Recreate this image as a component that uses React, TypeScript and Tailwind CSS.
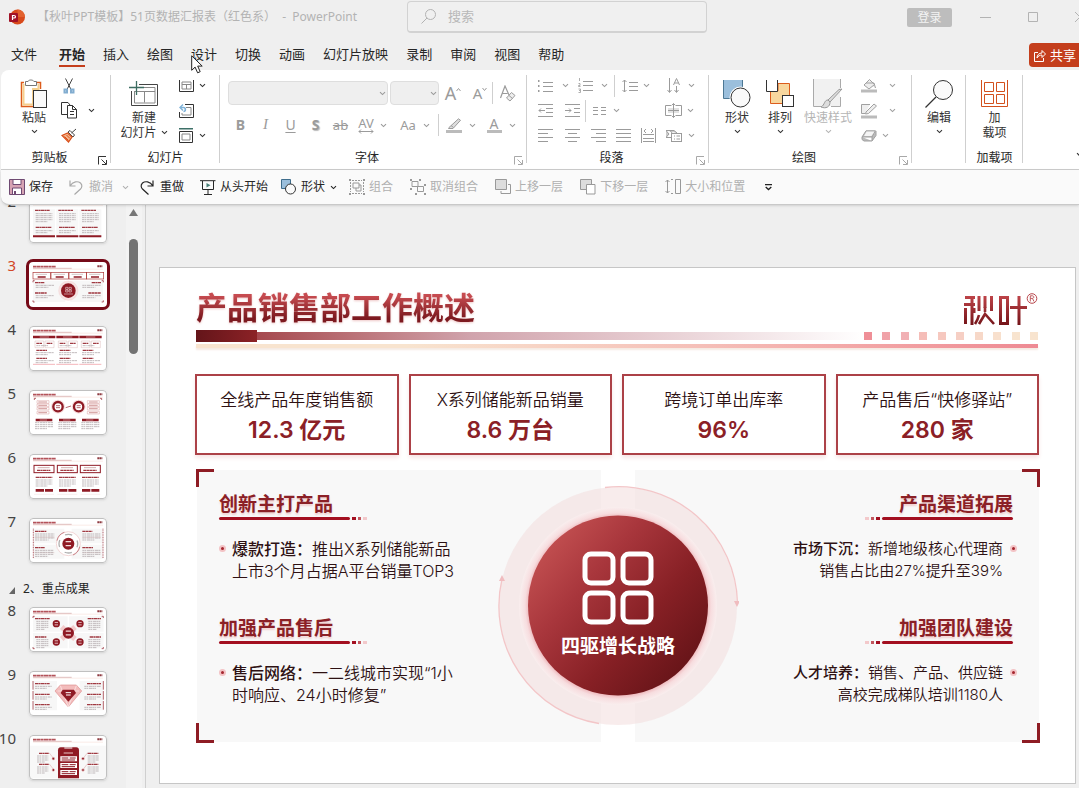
import React from "react";

type Kids = { children?: React.ReactNode };

function Svg({ w, h, children, className = "" }: { w: number; h: number; className?: string } & Kids) {
  return (
    <svg width={w} height={h} viewBox={`0 0 ${w} ${h}`} fill="none" stroke="currentColor" className={`shrink-0 ${className}`} aria-hidden="true">
      {children}
    </svg>
  );
}

function Chevron() {
  return (
    <Svg w={7} h={5}>
      <path d="M1 1.200 3.500 3.600 6 1.200" strokeWidth="1.100" />
    </Svg>
  );
}

function Tool({ label, className = "", children }: { label: string; className?: string } & Kids) {
  return (
    <button type="button" aria-label={label} className={`flex h-full shrink-0 items-center justify-center ${className}`}>
      {children}
    </button>
  );
}

function ToolRow({ children }: Kids) {
  return <div className="flex h-[25px] shrink-0 items-center">{children}</div>;
}

function Group({ title, launcher, dark, className = "", children }: { title?: string; launcher?: boolean; dark?: boolean; className?: string } & Kids) {
  return (
    <section className={`relative flex shrink-0 flex-col pt-[3px] ${className}`}>
      <div className="flex h-[76px]">{children}</div>
      <div className="flex h-[18px] items-center">
        <span className="flex-1 text-center text-xs text-[#262626]">{title}</span>
        {launcher && (
          <button type="button" aria-label={`${title}设置`} className={`mt-1 mr-px w-3 ${dark ? "text-[#333]" : "text-[#a8a8a8]"}`}>
            <Svg w={9} h={9}>
              <path d="M.5 8.500V.5h7.500M3.500 3.500l4.500 4.500M8.500 4v4.500H4" />
            </Svg>
          </button>
        )}
      </div>
      <span className="absolute top-[5px] right-0 bottom-[6px] w-px bg-[#cfcfcf]" />
    </section>
  );
}

function BigTool({ icon, label, className = "" }: { icon: React.ReactNode; label: React.ReactNode; className?: string }) {
  return (
    <button type="button" className={`flex shrink-0 flex-col items-center pt-[5px] text-xs leading-[15px] ${className}`}>
      <span className="flex h-8 items-center">{icon}</span>
      {label}
    </button>
  );
}

function AlignIcon({ rows }: { rows: [number, number][] }) {
  return (
    <Svg w={15} h={13}>
      {rows.map(([a, b], i) => (
        <path key={i} d={`M${a} ${i * 4 + 0.5}H${b}`} />
      ))}
    </Svg>
  );
}

function VRule({ className = "" }: { className?: string }) {
  return <span className={`h-[22px] w-px shrink-0 self-center bg-[#cfcfcf] ${className}`} />;
}

/* ---------- ribbon ---------- */

function Ribbon() {
  return (
    <div className="relative ml-px flex h-[100px] overflow-hidden rounded-tl-lg border-b border-[#cccccc] bg-white text-[#333]">
      <Group title="剪贴板" launcher dark className="w-[110px]">
        <BigTool
          className="w-[54px] pl-3"
          icon={
            <Svg w={28} h={30}>
              <path d="M4 3.500H1.500v24H13M17 3.500h3.500V10" stroke="#dc5c1c" strokeWidth="1.5" />
              <path d="M3.500 5v20.500h9.500V10h5.500V5" stroke="#f6cf8d" strokeWidth="2" />
              <path d="M5.500 6.500v-4H8c.5-2 5-2 6 0h2.500v4z" fill="#fff" stroke="#777" />
              <rect x="13.500" y="11.500" width="13" height="17" fill="#fafafa" stroke="#333" />
            </Svg>
          }
          label={<><span>粘贴</span><span className="mt-1"><Chevron /></span></>}
        />
        <div className="flex flex-col pl-1">
          <ToolRow>
            <Tool label="剪切" className="w-5">
              <Svg w={12} h={16}>
                <path d="m2.500.5 5.500 11M9.500.5 4 11.500" stroke="#444" />
                <rect x="1.500" y="11.500" width="2.500" height="3" stroke="#82add0" strokeWidth="2" />
                <rect x="8" y="11.500" width="2.500" height="3" stroke="#82add0" strokeWidth="2" />
              </Svg>
            </Tool>
          </ToolRow>
          <ToolRow>
            <Tool label="复制" className="w-5">
              <Svg w={16} h={17}>
                <path d="M6 12.500H.5V.5H7L9 3" />
                <path d="M6.500 3.500h5l4 4v8.500h-9zM11.500 3.500v4h4M9 9.500h4M9 12.500h4" />
              </Svg>
            </Tool>
            <Tool label="复制选项" className="w-6"><Chevron /></Tool>
          </ToolRow>
          <ToolRow>
            <Tool label="格式刷" className="w-5">
              <Svg w={16} h={15}>
                <path d="m15 1-4.500 4M7 4l5 5 1.500-2L9 2.500z" stroke="#444" fill="#fff" />
                <path d="M6.500 5 1 7.500 7.500 14 11 9z" fill="#f3b58c" stroke="#d9501b" strokeWidth="1.200" />
                <path d="m3.500 8.500 4 4M5.500 7l3.500 3.500" stroke="#d9501b" />
              </Svg>
            </Tool>
          </ToolRow>
        </div>
      </Group>

      <Group title="幻灯片" className="w-[109px]">
        <BigTool
          className="w-[65px] pl-px"
          icon={
            <Svg w={30} h={27}>
              <path d="M10 3.500h18.500v21h-26V10" stroke="#444" />
              <path d="M11 6.500h15M5.500 10v12h20.500V6.500M5.500 10.500h20.500M15.500 10.500v11" stroke="#888" />
              <path d="M7.500 0v14M0 6.500h15" stroke="#3d6d62" strokeWidth="1.300" />
            </Svg>
          }
          label={<><span>新建</span><span className="flex items-center gap-1">幻灯片<Chevron /></span></>}
        />
        <div className="flex flex-col">
          <ToolRow>
            <Tool label="版式" className="w-5">
              <Svg w={15} h={12}>
                <path d="M.5 0v11.500h14V0" /><path d="M3 2h9v7H3zM3 4.500h9M7.500 4.500V9" stroke="#888" />
              </Svg>
            </Tool>
            <Tool label="版式选项" className="w-3"><Chevron /></Tool>
          </ToolRow>
          <ToolRow>
            <Tool label="重置" className="w-5">
              <Svg w={15} h={14}>
                <path d="M6 .5h8.500v13H.5V8" /><path d="M7 3.500h5v7.500H3V9" stroke="#888" />
                <path d="M1.500 3.500h3c2.500 0 2.500 4 0 4" stroke="#7fb2d8" strokeWidth="1.600" /><path d="M4 .5 1 3.500 4 6.500" stroke="#7fb2d8" strokeWidth="1.400" />
              </Svg>
            </Tool>
          </ToolRow>
          <ToolRow>
            <Tool label="节" className="w-5">
              <Svg w={15} h={15}>
                <path d="M0 .7h14" stroke="#3d7068" strokeWidth="1.400" /><path d="M.5 3.500h13v11H.5z" /><path d="M3 6h8v6H3z" stroke="#888" />
              </Svg>
            </Tool>
            <Tool label="节选项" className="w-3"><Chevron /></Tool>
          </ToolRow>
        </div>
      </Group>

      <Group title="字体" launcher className="w-[307px] text-[#9b9b9b]">
        <div className="flex flex-col gap-2 pt-2 pl-2">
          <div className="flex h-6 items-center">
            <div className="relative">
              <select aria-label="字体" disabled className="block h-6 w-40 appearance-none rounded border border-[#dedede] bg-[#efefef]"><option> </option></select>
              <span className="absolute top-[10px] right-[2px]"><Chevron /></span>
            </div>
            <div className="relative ml-[2px]">
              <select aria-label="字号" disabled className="block h-6 w-[49px] appearance-none rounded border border-[#dedede] bg-[#efefef]"><option> </option></select>
              <span className="absolute top-[10px] right-[2px]"><Chevron /></span>
            </div>
            <Tool label="增大字号" className="ml-1 w-5 text-lg leading-none">A<Svg w={5} h={12}><path d="m.5 4 2-2.500 2 2.500" /></Svg></Tool>
            <Tool label="减小字号" className="ml-[7px] w-5 text-[15px] leading-none">A<Svg w={5} h={12}><path d="m.5 1 2 2.500 2-2.500" /></Svg></Tool>
            <VRule className="ml-[2px]" />
            <Tool label="清除格式" className="ml-[3px] w-6">
              <Svg w={16} h={17}>
                <path d="M.5 13 5 1l4 9M2.500 8.500h5" strokeWidth="1.200" /><path d="m6.500 13 5-5.500 3.500 3-5 5.500z" fill="#eee" /><path d="m9 10.500 3.500 3" />
              </Svg>
            </Tool>
          </div>
          <div className="flex h-6 items-center text-sm">
            <Tool label="加粗" className="w-[25px] font-bold">B</Tool>
            <Tool label="倾斜" className="w-[25px] font-['Liberation_Serif'] text-[15px] italic">I</Tool>
            <Tool label="下划线" className="w-[25px] underline underline-offset-2">U</Tool>
            <Tool label="阴影" className="w-[25px] font-bold [text-shadow:1px_1px_1px_#bbb]">S</Tool>
            <Tool label="删除线" className="w-[25px] text-[13px] line-through">ab</Tool>
            <Tool label="字符间距" className="w-[26px] flex-col text-[13px] leading-3">AV<Svg w={16} h={5}><path d="M1 2.500h14M3 .5l-2 2 2 2M13 .5l2 2-2 2" /></Svg></Tool>
            <Tool label="字符间距选项" className="w-2"><Chevron /></Tool>
            <Tool label="更改大小写" className="ml-[7px] w-7 text-[13px]">Aa</Tool>
            <Tool label="大小写选项" className="w-2"><Chevron /></Tool>
            <VRule className="ml-2" />
            <Tool label="突出显示" className="ml-[3px] w-6">
              <Svg w={16} h={15}>
                <path d="M3 9.500 12.500.8l2 1.500L7 10.500H2.500zM5 7.500l2.500 2" fill="#ddd" /><path d="M0 13.500h16" stroke="#bbb" strokeWidth="3" />
              </Svg>
            </Tool>
            <Tool label="突出显示选项" className="w-3"><Chevron /></Tool>
            <Tool label="字体颜色" className="ml-1 w-6 flex-col text-[14px] leading-[13px]">A<span className="h-[3px] w-[15px] bg-[#bbb]" /></Tool>
            <Tool label="字体颜色选项" className="w-3"><Chevron /></Tool>
          </div>
        </div>
      </Group>

      <Group title="段落" launcher className="w-[182px] text-[#9b9b9b]">
        <div className="flex w-full flex-col pl-[5px]">
          <ToolRow>
            <Tool label="项目符号" className="w-[27px]"><Svg w={15} h={14}><path d="M5 3.500h10M5 7.500h10M5 12.500h10" /><path d="M.5 1v2M.5 6v2M.5 11v2" strokeWidth="2" /></Svg></Tool>
            <Tool label="项目符号选项" className="w-3"><Chevron /></Tool>
            <Tool label="编号" className="w-7"><Svg w={15} h={15}><path d="M5 3.500h10M5 7.500h10M5 12.500h10" /><path d="M1.500 0v3M.5 5.500h1.500v2H.5v1h2M.5 11h2v3.500h-2M1 12.500h1" strokeWidth=".8" /></Svg></Tool>
            <Tool label="编号选项" className="w-[10px]"><Chevron /></Tool>
            <VRule className="ml-[5px]" />
            <Tool label="行距" className="ml-[3px] w-6"><Svg w={16} h={14}><path d="M2.500 1v12M.5 3l2-2 2 2M.5 11l2 2 2-2M7 3.500h9M7 7.500h9M7 11.500h9" /></Svg></Tool>
            <Tool label="行距选项" className="w-2"><Chevron /></Tool>
            <Tool label="文字方向" className="ml-[11px] w-[26px]"><Svg w={14} h={16}><path d="M2.500 0v14M.5 12l2 2.500 2-2.500M9.500 8v6M7.500 12l2 2.500 2-2.500M6.500 7l3-6.500L12.500 7M7.500 5h4" /></Svg></Tool>
            <Tool label="文字方向选项" className="w-2"><Chevron /></Tool>
          </ToolRow>
          <ToolRow>
            <Tool label="减少缩进" className="w-[27px]"><Svg w={15} h={13}><path d="M0 .5h15M8 4.500h7M8 8.500h7M0 12.500h15M1 6.500h6M3 4.500l-2 2 2 2" /></Svg></Tool>
            <Tool label="增加缩进" className="w-[26px]"><Svg w={15} h={13}><path d="M0 .5h15M9 4.500h6M9 8.500h6M0 12.500h15M0 6.500h6M4 4.500l2 2-2 2" /></Svg></Tool>
            <VRule />
            <Tool label="分栏" className="w-[26px]"><Svg w={13} h={8}><path d="M0 .5h5M8 .5h5M0 3.500h5M8 3.500h5M0 7.500h5M8 7.500h5" /></Svg></Tool>
            <Tool label="分栏选项" className="w-2"><Chevron /></Tool>
            <Tool label="对齐文本" className="ml-10 w-[26px]"><Svg w={17} h={15}><path d="M6 2.500H.5v10H6M11 2.500h5.500v10H11" /><rect x="3" y="5" width="11" height="5" fill="#e2e2e2" stroke="none" /><path d="M8.500.5v14M6.500 2.500l2-2 2 2M6.500 12.500l2 2 2-2M3 7.500h11" /></Svg></Tool>
            <Tool label="对齐文本选项" className="w-2"><Chevron /></Tool>
          </ToolRow>
          <ToolRow>
            <Tool label="左对齐" className="w-[27px]"><AlignIcon rows={[[0, 15], [0, 10], [0, 15], [0, 10]]} /></Tool>
            <Tool label="居中" className="w-[26px]"><AlignIcon rows={[[0, 15], [3, 12], [0, 15], [3, 12]]} /></Tool>
            <Tool label="右对齐" className="w-[26px]"><AlignIcon rows={[[0, 15], [5, 15], [0, 15], [5, 15]]} /></Tool>
            <Tool label="两端对齐" className="w-[25px]"><AlignIcon rows={[[0, 15], [0, 15], [0, 15], [0, 15]]} /></Tool>
            <Tool label="分散对齐" className="w-[25px]"><Svg w={15} h={15}><path d="M.5 0v15M14.500 0v15M2 6.500h11M2 10.500h11M2 13.500h11M5 1 3 3l2 2M10 1l2 2-2 2" /></Svg></Tool>
            <Tool label="转换为图形" className="w-[26px]"><Svg w={17} h={13}><path d="M0 1.500h8l3 2.500M0 8.500h5M0 1.500 3 5 0 8.500M4 1.500 7 5" fill="#ccc" /><rect x="5.500" y="4.500" width="10" height="8" fill="#fff" /><path d="M8 7h1M10.500 7h3.500M8 10h1M10.500 10h3.500" /></Svg></Tool>
            <Tool label="图形选项" className="w-2"><Chevron /></Tool>
          </ToolRow>
        </div>
      </Group>

      <Group title="绘图" launcher className="w-[203px]">
        <BigTool
          className="ml-[6px] w-11"
          icon={<Svg w={28} h={28}><path d="M.5 0v18.500h19V0" fill="#9bbfdc" stroke="#4d7894" /><circle cx="17.500" cy="17.500" r="10.500" fill="#fff" stroke="#fff" /><circle cx="17.500" cy="17.500" r="9.500" fill="#fafafa" stroke="#333" /></Svg>}
          label={<><span>形状</span><span className="mt-1"><Chevron /></span></>}
        />
        <BigTool
          className="w-[42px]"
          icon={<Svg w={28} h={28}><path d="M4.500 11v12.500h19v-20H12v7.500z" fill="#f8d79e" stroke="#dc5c1c" /><path d="M.5 0v11.500h11V0" fill="#fff" stroke="#333" /><rect x="16.500" y="15.500" width="11" height="11" fill="#fff" stroke="#333" /></Svg>}
          label={<><span>排列</span><span className="mt-1"><Chevron /></span></>}
        />
        <BigTool
          className="w-[54px] text-[#b5b5b5]"
          icon={<Svg w={30} h={30}><path d="M1 0h26v27H1z" fill="#f1f1f1" stroke="none" /><path d="M.5 0v27.500h8M27.500 0v9M27.500 18v9.500H18" stroke="#aaa" /><path d="M29 10 17 23l-2-2L26 10.500zM15 21c-4 0-3 5-7 7 5 2 9 0 9-5z" fill="#ddd" stroke="#999" /></Svg>}
          label={<><span>快速样式</span><span className="mt-1"><Chevron /></span></>}
        />
        <div className="flex flex-col pl-1 text-[#a0a0a0]">
          <ToolRow>
            <Tool label="形状填充" className="w-5"><Svg w={16} h={15}><path d="m3 7 5.500-5.500 5 5L8 11zM5 5h8l1.500 5" fill="#eee" /><path d="M0 13h16" stroke="#bbb" strokeWidth="3" /></Svg></Tool>
            <Tool label="填充选项" className="w-[26px]"><Chevron /></Tool>
          </ToolRow>
          <ToolRow>
            <Tool label="形状轮廓" className="w-5"><Svg w={16} h={16}><path d="M9 1.500H.5v9H4M5 9l8-8 2.500 2-8 7.500-3 .5z" fill="#eee" /><path d="M0 14h16" stroke="#bbb" strokeWidth="3" /></Svg></Tool>
            <Tool label="轮廓选项" className="w-[26px]"><Chevron /></Tool>
          </ToolRow>
          <ToolRow>
            <Tool label="形状效果" className="w-5"><Svg w={16} h={12}><path d="M1 7 5 .8h9.500L11 7H1zM11 7v4l4-5.500V1M1 7v2.500l2 1.500h8" fill="#bbb" /><path d="M5.500 1.500h8L10.500 6H3z" fill="#f4f4f4" stroke="none" /></Svg></Tool>
            <Tool label="效果选项" className="w-3"><Chevron /></Tool>
          </ToolRow>
        </div>
      </Group>

      <Group className="w-[54px]">
        <BigTool
          className="w-full"
          icon={<Svg w={28} h={28}><circle cx="18" cy="10" r="9.500" fill="#fafafa" stroke="#333" /><path d="M11 17 .5 27.500" stroke="#333" strokeWidth="1.200" /></Svg>}
          label={<><span>编辑</span><span className="mt-1"><Chevron /></span></>}
        />
      </Group>

      <Group title="加载项" className="w-[57px]">
        <BigTool
          className="w-full"
          icon={<Svg w={27} h={28} className="text-[#d3501d]"><path d="M.5 0v26.500h26V0" /><path d="M3.500 2.500h9v9h-9zM15.500 2.500h8v9h-8zM3.500 14.500h9v9h-9zM15.500 14.500h8v9h-8z" /></Svg>}
          label={<><span>加</span><span>载项</span></>}
        />
      </Group>
      <button type="button" aria-label="功能区显示选项" className="mt-auto -mr-1 mb-3 ml-auto"><Chevron /></button>
    </div>
  );
}

/* ---------- quick access bar ---------- */

function Quick({ icon, label, muted, menu, className = "" }: { icon: React.ReactNode; label: string; muted?: boolean; menu?: string; className?: string }) {
  return (
    <button type="button" className={`flex shrink-0 items-center text-xs ${muted ? "text-[#b0b0b0]" : "text-[#262626]"} ${className}`}>
      <span className="flex w-5 items-center">{icon}</span>
      {label}
      {menu && <span className={menu}><Chevron /></span>}
    </button>
  );
}

function QuickBar() {
  return (
    <div className="relative z-10 ml-px flex h-[35px] items-center overflow-hidden rounded-bl-lg border-b border-[#c9c9c9] bg-[#fafafa] pl-2 shadow-sm">
      <Quick label="保存" icon={<Svg w={16} h={16}><path d="M.5.5h15v15H.5z" fill="#d6a3b3" stroke="#6f4a72" /><path d="M4 .5h8v5H4zM3.500 15v-6h9v6" fill="#fff" stroke="#6f4a72" /><path d="M6 12v3" stroke="#6f4a72" strokeWidth="2" /></Svg>} />
      <Quick className="ml-4" muted menu="ml-[9px]" label="撤消" icon={<Svg w={14} h={15} className="text-[#a8a8a8]"><path d="M1 .5v5.500h5.500M1 6c3-5 8-5 10.500-3 2.500 2.300 1 5 0 6l-6 5.500" strokeWidth="1.200" /></Svg>} />
      <Quick className="ml-[11px]" label="重做" icon={<Svg w={14} h={15}><path d="M13 .5v5.500H7.500M13 6C10 1 5 1 2.500 3 0 5.300 1.500 8 2.500 9l6 5.500" strokeWidth="1.200" /></Svg>} />
      <Quick className="ml-4" label="从头开始" icon={<Svg w={16} h={15}><path d="M0 .7h15.500M2.500 1v8.500h11V1M8 9.500V14M4 14.500h8" /><path d="m6.500 3 4 2.300-4 2.200z" fill="#477f76" stroke="none" /></Svg>} />
      <Quick className="ml-[13px]" menu="ml-[5px]" label="形状" icon={<Svg w={16} h={16}><path d="M.5.5h9v9h-9z" fill="#9bbfdc" stroke="#3f6d8c" /><circle cx="9.500" cy="10" r="5" fill="#fafafa" stroke="#333" /></Svg>} />
      <Quick className="ml-3" muted label="组合" icon={<Svg w={16} h={16} className="text-[#999]"><path d="M3 1.500h10M3 14.500h10M1.500 3v10M14.500 3v10" strokeDasharray="2 1" /><path d="M0 0h2v2H0zM14 0h2v2h-2zM0 14h2v2H0zM14 14h2v2h-2z" fill="currentColor" stroke="none" /><path d="M4 4h6v5H4zM7 9v3h5V6h-2" /></Svg>} />
      <Quick className="ml-[17px]" muted label="取消组合" icon={<Svg w={16} h={16} className="text-[#999]"><path d="M2 2.500h6v5H2zM7.500 7.500h6v5h-6z" /><path d="M0 0h2v2H0zM9 0h2v2H9zM0 9h2v2H0zM5 14h2v2H5zM14 14h2v2h-2zM14 5h2v2h-2zM4 .5h1M7 .5h1M9 15h2" fill="currentColor" stroke="none" /></Svg>} />
      <Quick className="ml-[17px]" muted label="上移一层" icon={<Svg w={16} h={16} className="text-[#999]"><path d="M.5.5h11v10H.5z" fill="#ddd" /><path d="M13 5.500h2.500v9H6V12" /></Svg>} />
      <Quick className="ml-[17px]" muted label="下移一层" icon={<Svg w={16} h={16} className="text-[#999]"><path d="M.5.5h11v10H.5z" fill="#ddd" /><path d="M6.500 5.500h8.500v9.500H6.500z" fill="#fff" /></Svg>} />
      <Quick className="ml-[17px]" muted label="大小和位置" icon={<Svg w={16} h={16} className="text-[#999]"><path d="M2.500 1v13M.5 3l2-2 2 2M.5 12l2 2 2-2" /><path d="M6 .5h3M6 14.500h3" strokeDasharray="2 1" /><path d="M10.500.5h5v14h-5z" /></Svg>} />
      <button type="button" aria-label="自定义快速访问工具栏" className="ml-5 text-[#222]"><Svg w={7} h={7}><path d="M0 .7h7M.7 3l2.800 2.600L6.300 3" strokeWidth="1.300" /></Svg></button>
    </div>
  );
}

/* ---------- slide thumbnails ---------- */

const RED = "#8f1a24";

function TextRows({ x, y, w, n, gap = 6 }: { x: number; y: number; w: number; n: number; gap?: number }) {
  return (
    <g stroke="#b5acae" strokeWidth="2.500" strokeDasharray="7 1 4 2 9 1">
      {Array.from({ length: n }, (_, i) => (
        <path key={i} d={`M${x} ${y + i * gap}h${i === n - 1 ? w * 0.7 : w}`} />
      ))}
    </g>
  );
}

function Head({ x, y, w }: { x: number; y: number; w: number }) {
  return <path d={`M${x} ${y}h${w}`} stroke="#a03a42" strokeWidth="4" strokeDasharray="10 1 6 1" />;
}

function Hub({ x, y, r }: { x: number; y: number; r: number }) {
  return (
    <g stroke="none">
      <circle cx={x} cy={y} r={r} fill={RED} />
      <path d={`M${x - r / 2.2} ${y - r / 3}h${r / 1.1}M${x - r / 2.2} ${y + r / 3}h${r / 1.1}`} stroke="#f3dada" strokeWidth={r / 4.5} />
    </g>
  );
}

const COLS = [18, 88, 157];

const ART: Record<number, React.ReactNode> = {
  2: (
    <>
      {COLS.map((x) => (
        <g key={x}>
          <path d={`M${x - 6} 34h66v84h-66z`} fill="#f7f7f7" stroke="none" />
          <Head x={x} y={37} w={44} />
          <TextRows x={x + 2} y={47} w={50} n={5} />
          <Head x={x + 2} y={88} w={48} />
          <TextRows x={x + 2} y={98} w={50} n={2} />
          <path d={`M${x - 6} 115h66`} stroke={RED} strokeWidth="6" />
        </g>
      ))}
    </>
  ),
  3: (
    <>
      {[12, 66, 120, 172].map((x) => (
        <g key={x}><rect x={x} y="31" width="52" height="20" stroke="#a33" strokeWidth="2" /><path d={`M${x + 8} 37h34`} stroke="#b9aaaa" strokeWidth="2" /><path d={`M${x + 14} 45h24`} stroke={RED} strokeWidth="4" /></g>
      ))}
      <path d="M12 56h97v64H12zM124 56h98v64h-98z" fill="#f7f7f7" stroke="none" />
      <path d="M12 61v-5h5M218 56h5v5M12 115v5h5M218 120h5v-5" stroke={RED} strokeWidth="2" />
      <circle cx="118" cy="86" r="29" fill="#f7e4e4" stroke="#efc4c4" />
      <circle cx="118" cy="86" r="22" fill={RED} />
      <path d="M110 76h7v6h-7zM120 76h7v6h-7zM110 84h7v6h-7zM120 84h7v6h-7zM105 96h27" stroke="#fff" strokeWidth="1.500" />
      <Head x={18} y={62} w={28} /><TextRows x={20} y={70} w={56} n={2} />
      <Head x={18} y={93} w={36} /><TextRows x={20} y={101} w={54} n={2} />
      <Head x={188} y={62} w={28} /><TextRows x={160} y={70} w={56} n={2} />
      <Head x={178} y={93} w={38} /><TextRows x={160} y={101} w={56} n={2} />
    </>
  ),
  4: (
    <>
      {COLS.map((x) => (
        <g key={x}>
          <path d={`M${x - 6} 33h67`} stroke={RED} strokeWidth="7" /><path d={`M${x + 14} 33h28`} stroke="#e3b9b9" strokeWidth="2" />
          <path d={`M${x} 45h26v20h-26zM${x + 30} 45h27v20h-27z`} stroke="#c99" />
          <Head x={x + 4} y={52} w={18} /><Head x={x + 35} y={52} w={18} /><TextRows x={x + 4} y={59} w={50} n={1} />
          <Head x={x + 4} y={73} w={32} /><TextRows x={x + 2} y={80} w={54} n={2} />
          <Head x={x + 4} y={97} w={32} /><TextRows x={x + 2} y={104} w={54} n={2} />
          <path d={`M${x - 6} 115h66`} stroke="#ee8f97" strokeWidth="2" />
        </g>
      ))}
    </>
  ),
  5: (
    <>
      {[32, 42, 52, 64].map((y) => (
        <g key={y}><path d={`M24 ${y}h36v8H24zM175 ${y}h36v8h-36z`} stroke="#c77" /><path d={`M28 ${y + 4}h26M180 ${y + 4}h26`} stroke="#b66" strokeWidth="2" /></g>
      ))}
      {[87, 149].map((x) => (
        <g key={x}><circle cx={x} cy="50" r="21" fill="#f7dede" stroke="none" /><circle cx={x} cy="50" r="14" fill="#fff" stroke={RED} strokeWidth="7" /><path d={`M${x - 6} 47h12M${x - 6} 53h12`} stroke={RED} strokeWidth="2" /></g>
      ))}
      <path d="M110 53l16-5" stroke={RED} strokeWidth="2" />
      <path d="M16 30v-5h5M213 25h5v5" stroke={RED} strokeWidth="2" />
      {COLS.map((x) => (
        <g key={x}><path d={`M${x + 2} 90h50`} stroke={RED} strokeWidth="7" /><path d={`M${x + 14} 90h22`} stroke="#e3b9b9" strokeWidth="2" /><TextRows x={x} y={98} w={54} n={4} /></g>
      ))}
    </>
  ),
  6: (
    <>
      {COLS.map((x) => (
        <g key={x}>
          <rect x={x - 3} y="34" width="60" height="22" stroke={RED} strokeWidth="3" /><path d={`M${x + 8} 41h36`} stroke="#b88" strokeWidth="2" /><Head x={x + 6} y={49} w={40} />
          <Head x={x + 2} y={70} w={50} /><TextRows x={x + 2} y={78} w={50} n={4} />
          <path d={`M${x + 2} 109h25M${x + 30} 109h24`} stroke={RED} strokeWidth="8" />
          <path d={`M${x - 3} 121h60`} stroke="#eccaca" />
        </g>
      ))}
    </>
  ),
  7: (
    <>
      <path d="M12 32h94v44H12zM12 80h94v42H12zM128 32h94v44h-94zM128 80h94v42h-94z" fill="#f7f7f7" stroke="none" />
      <circle cx="118" cy="77" r="36" fill="#fff" stroke="#f2d6d6" strokeWidth="3" />
      <circle cx="118" cy="77" r="28" stroke="#b0b0b0" strokeWidth="4" strokeDasharray="22 22" strokeDashoffset="11" />
      <path d="M84 68c3-14 10-21 22-25M152 86c-3 14-10 21-20 25" stroke="#b4535a" strokeWidth="2" />
      <Hub x={118} y={77} r={18} />
      <path d="M13 32v90M222 32v90" stroke={RED} strokeWidth="2" strokeDasharray="3 2" />
      <path d="M16 58h60M16 104h60M160 58h56M160 104h56" stroke="#d9a5a5" />
      <Head x={18} y={40} w={34} /><TextRows x={18} y={48} w={58} n={4} />
      <Head x={18} y={89} w={30} /><TextRows x={18} y={97} w={56} n={4} />
      <Head x={160} y={40} w={30} /><TextRows x={160} y={48} w={54} n={4} />
      <Head x={160} y={89} w={32} /><TextRows x={160} y={97} w={54} n={4} />
    </>
  ),
  8: (
    <>
      <path d="M12 28h104v46H12zM120 28h104v46H120zM12 78h104v46H12zM120 78h104v46H120z" fill="#f7f7f7" stroke="none" />
      <path d="m98 60 40 36M138 60 98 96" stroke="#f3cccc" strokeWidth="16" />
      <Hub x={118} y={78} r={17} />
      {[[82, 50], [153, 50], [82, 105], [153, 105]].map(([x, y]) => <Hub key={`${x}-${y}`} x={x} y={y} r={11} />)}
      <path d="M12 33v-5h5M218 28h5v5M12 120v5h5M218 125h5v-5" stroke={RED} strokeWidth="2" />
      <Head x={18} y={35} w={44} /><TextRows x={22} y={43} w={36} n={5} />
      <Head x={18} y={90} w={34} /><TextRows x={22} y={98} w={36} n={5} />
      <Head x={176} y={35} w={40} /><TextRows x={178} y={43} w={36} n={5} />
      <Head x={182} y={90} w={34} /><TextRows x={178} y={98} w={36} n={5} />
    </>
  ),
  9: (
    <>
      <path d="M12 30h72v88H12zM152 30h72v88h-72z" fill="#f7f7f7" stroke="none" />
      <path d="M12 30v90M223 30v90" stroke={RED} strokeWidth="2" strokeDasharray="26 4" />
      <path d="M94 42h48l16 18-40 48-40-48z" fill="#f3bcbc" stroke="#dd8f8f" strokeWidth="2" />
      <path d="M86 60h64M94 44l24 64 24-64" stroke="#fff" strokeWidth="1.500" />
      <path d="M101 56h34l6 10-23 26-23-26z" fill={RED} stroke="none" /><path d="M110 65h16M111 72h14" stroke="#fff" strokeWidth="3" />
      {[38, 70, 101].map((y) => (
        <g key={y}><Head x={18} y={y} w={44} /><TextRows x={18} y={y + 8} w={50} n={2} /><Head x={174} y={y} w={42} /><TextRows x={166} y={y + 8} w={50} n={2} /></g>
      ))}
    </>
  ),
  10: (
    <>
      <path d="M0 32h234v98H0z" fill="#f8f8f8" stroke="none" />
      <path d="M87 130V46c0-6 3-9 8-9h47c5 0 8 3 8 9v84z" fill={RED} stroke="none" />
      <path d="M106 39h24" stroke="#fff" strokeWidth="3" />
      <path d="M104 54h28" stroke="#e8c5c5" strokeWidth="3" />
      {[64, 84, 105].map((y) => (
        <g key={y}><path d={`M94 ${y}h50v15H94z`} fill="#fff" stroke="none" /><path d={`M98 ${y + 5}h20M122 ${y + 5}h18M98 ${y + 11}h40`} stroke={RED} strokeWidth="3" /></g>
      ))}
      <path d="M48 55h14l12 16M48 88h14l12 16M186 55h-12l-12 16M186 88h-12l-12 16" stroke="#c77" />
      {[[73, 71], [73, 105], [162, 71], [162, 105]].map(([x, y]) => <circle key={`${x}-${y}`} cx={x} cy={y} r="4" fill={RED} stroke="#f1cccc" strokeWidth="2" />)}
      <Head x={30} y={55} w={30} /><TextRows x={24} y={63} w={34} n={4} />
      <Head x={30} y={88} w={30} /><TextRows x={24} y={96} w={34} n={4} />
      <Head x={176} y={55} w={32} /><TextRows x={176} y={63} w={34} n={4} />
      <Head x={176} y={88} w={32} /><TextRows x={176} y={96} w={34} n={4} />
    </>
  ),
};

function Thumb({ n, active }: { n: number; active?: boolean }) {
  return (
    <li className="flex h-16 shrink-0">
      <span className={`flex w-4 shrink-0 justify-end text-[15px] leading-[14px] ${active ? "text-[#d24726]" : "text-[#444]"}`}>{n}</span>
      <button
        type="button"
        aria-label={`幻灯片 ${n}`}
        className={`mt-1 ml-[13px] h-[45px] w-[78px] overflow-hidden rounded-sm bg-white ${active ? "outline-[3px] outline-[#760a18]" : "outline-1 -outline-offset-1 outline-[#c0c0c0] shadow-sm"}`}
      >
        <svg viewBox="0 0 234 135" className="block h-full w-full" fill="none" stroke="none" aria-hidden="true">
          <path d="M12 14h68" stroke="#b4535a" strokeWidth="5" strokeDasharray="9 1 12 1" />
          <path d="M205 13h15" stroke="#8f3a40" strokeWidth="6" strokeDasharray="6 1" />
          <path d="M12 19h116" stroke="#cf9a9a" strokeWidth="2" />
          <path d="M12 21.500h210" stroke="#f5d6cf" strokeWidth="1.500" />
          {ART[n]}
        </svg>
      </button>
    </li>
  );
}

function Outline() {
  return (
    <aside className="flex w-[146px] shrink-0 overflow-hidden border-r border-[#cfcfcf] bg-[#efefef]">
      <div className="w-[126px] shrink-0">
        <ol className="-mt-[11px] flex flex-col">
          {[2, 3, 4, 5, 6, 7].map((n) => <Thumb key={n} n={n} active={n === 3} />)}
          <li className="flex h-[25px] gap-2 pl-[9px] text-xs leading-[22px] text-[#262626]">
            <Svg w={6} h={7} className="mt-[9px]"><path d="M6 0v7H0z" fill="#666" stroke="none" /></Svg>
            2、重点成果
          </li>
          {[8, 9, 10].map((n) => <Thumb key={n} n={n} />)}
        </ol>
      </div>
      <div className="flex w-4 flex-col items-center bg-[#f3f3f3] pt-1 pr-[2px]">
        <Svg w={9} h={7}><path d="M4.500 0 9 7H0z" fill="#777" stroke="none" /></Svg>
        <span className="mt-[23px] h-[115px] w-[9px] rounded-full bg-[#737373]" />
      </div>
    </aside>
  );
}

/* ---------- slide ---------- */

const CARDS = [
  ["全线产品年度销售额", "12.3 亿元"],
  ["X系列储能新品销量", "8.6 万台"],
  ["跨境订单出库率", "96%"],
  ["产品售后“快修驿站”", "280 家"],
];

function Dots({ right }: { right?: boolean }) {
  return (
    <span className={`flex h-[3px] gap-[2px] ${right ? "flex-row-reverse" : ""}`}>
      <i className="w-[131px] rounded-sm bg-[#a30f20]" />
      <i className="w-1 bg-[#a30f20]" />
      <i className="w-[3px] bg-[#c2575f]" />
      <i className="w-1 bg-[#f3c9cb]" />
    </span>
  );
}

function Point({ title, lead, first, second, right }: { title: string; lead: string; first: string; second: string; right?: boolean }) {
  return (
    <article>
      <h2 className={`text-[19px] leading-6 font-bold text-[#8b2026] [text-shadow:0_2px_2px_#f0cfcf] ${right ? "text-right" : ""}`}>{title}</h2>
      <Dots right={right} />
      <div className={`mt-[18px] flex leading-[22px] font-[350] text-[#2e1113] ${right ? "-mr-1 flex-row-reverse gap-[7px] text-right text-[15px]" : "gap-[6px] text-base"}`}>
        <i className="mt-[7px] h-[7px] w-[7px] shrink-0 rounded-full border-2 border-[#f3c3c5] bg-[#a5262f]" />
        <p className="whitespace-nowrap">
          <b className="font-medium">{lead}</b>{first}
          <br />
          {second}
        </p>
      </div>
    </article>
  );
}

function Hubs() {
  return (
    <div className="absolute top-1/2 left-1/2 flex h-[240px] w-[242px] -translate-x-1/2 -translate-y-1/2 flex-col items-center">
      <svg viewBox="0 0 242 240" className="absolute inset-0 h-full w-full" fill="none" aria-hidden="true">
        <defs>
          <linearGradient id="core" x1="0.1" y1="0.15" x2="0.9" y2="0.85">
            <stop offset="0" stopColor="#c24f50" />
            <stop offset=".3" stopColor="#a8363c" />
            <stop offset=".65" stopColor="#872025" />
            <stop offset="1" stopColor="#661418" />
          </linearGradient>
          <radialGradient id="halo">
            <stop offset=".88" stopColor="#e9a5aa" />
            <stop offset=".94" stopColor="#f7dddf" />
            <stop offset="1" stopColor="#f9eeee" />
          </radialGradient>
        </defs>
        <circle cx="121" cy="120" r="119" fill="#f3dcdc" fillOpacity=".55" />
        <circle cx="121" cy="120" r="99" fill="url(#halo)" />
        <circle cx="121" cy="119.500" r="90" fill="url(#core)" />
        <path d="M108 1.500A119 119 0 0 1 240.500 117" stroke="#f3c6c8" strokeWidth="1.300" />
        <path d="M102 237.500A119 119 0 0 1 5 93" stroke="#f3c6c8" strokeWidth="1.300" />
        <path d="M237 115h6l-3 6zM2 95h6l-3-6z" fill="#f0bcbf" />
        <g stroke="#fff" strokeWidth="5">
          <rect x="88" y="68" width="28" height="29" rx="6" />
          <rect x="126" y="68" width="28" height="29" rx="6" />
          <rect x="88" y="107" width="28" height="29" rx="6" />
          <rect x="126" y="107" width="28" height="29" rx="6" />
        </g>
      </svg>
      <p className="relative mt-[149px] text-[19px] leading-6 font-bold text-white">四驱增长战略</p>
    </div>
  );
}

const SQUARES = ["bg-[#ef8f97]", "bg-[#f0a2a8]", "bg-[#f1b0b4]", "bg-[#f5bdb8]", "bg-[#f6c8bf]", "bg-[#f6cfc4]", "bg-[#f7d8c8]", "bg-[#f8e0cd]", "bg-[#f8e4cf]", "bg-[#f8e4cf]"];

function Slide() {
  return (
    <div className="flex min-h-0 flex-1 flex-col border border-[#c6c6c6] bg-white pt-5 pr-[35px] pl-9 font-[Inter,'Noto_Sans_CJK_SC',sans-serif]">
      <header className="mr-[2px] flex items-start justify-between pb-[2px]">
        <h1 className="bg-linear-to-b from-[#c64b50] from-20% to-[#7d1a20] to-75% bg-clip-text text-[31px] leading-10 font-bold text-transparent drop-shadow-[0_1px_1px_#eec8c8]">产品销售部工作概述</h1>
        <svg width="74" height="32" viewBox="0 0 74 32" className="mt-[5px]" fill="none" role="img" aria-label="秋叶">
          <defs>
            <linearGradient id="brand" x1="0" y1="0" x2="0" y2="32" gradientUnits="userSpaceOnUse">
              <stop offset="0" stopColor="#c5484d" />
              <stop offset="1" stopColor="#741419" />
            </linearGradient>
          </defs>
          <g stroke="url(#brand)" strokeWidth="3">
            <path d="M1 4.500h10M0 11.500h11M8 4v28M1.500 15v16M10 15v5M15 3v15M21 3v12M27.500 3v15" />
            <path d="M21 14v5M15 22c-1 4-2 6-4 9M15 31l6-10 9 10" strokeWidth="2.600" />
            <path d="M36.500 4.500h7v26h-7zM46 14.500h17M55 3v29" />
          </g>
          <circle cx="68" cy="5.500" r="4.800" stroke="#b8474c" />
          <path d="M66.300 8.500V2.800h2c2 0 2 2.600 0 2.600h-1.800M68.500 5.500l1.500 3" stroke="#b8474c" strokeWidth=".9" />
        </svg>
      </header>

      <div className="mr-[2px] flex flex-col">
        <div className="flex h-3 items-center">
          <span className="h-3 w-[61px] shrink-0 bg-linear-to-r from-[#64151a] to-[#8c2226]" />
          <span className="h-2 flex-1 bg-linear-to-r from-[#a5484e] via-[#d0a3ac] via-35% to-white" />
          <span className="flex w-[174px] shrink-0 justify-between">
            {SQUARES.map((c, i) => <i key={i} className={`h-2 w-2 ${c}`} />)}
          </span>
        </div>
        <span className="mt-[2px] h-1 bg-linear-to-r from-[#f8e4cf] from-25% via-[#f5bfb8] via-60% to-[#ee8a93] shadow-[0_2px_2px_#f5e9e2]" />
      </div>

      <ul className="mt-[26px] mr-px -ml-px grid grid-cols-4 gap-[10px]">
        {CARDS.map(([name, value]) => (
          <li key={name} className="flex h-[81px] flex-col items-center justify-center border-2 border-[#ac4147] pt-[2px] text-center whitespace-nowrap shadow-[0_3px_4px_#f6e6e6]">
            <span className="text-[17px] leading-7 font-[350] text-[#2e1113]">{name}</span>
            <strong className="text-[23px] leading-8 font-semibold text-[#8b2026]">{value}</strong>
          </li>
        ))}
      </ul>

      <div className="relative mt-[14px] grid h-[274px] shrink-0 grid-cols-2 gap-[34px] p-px">
        <div className="flex flex-col gap-[35px] bg-[#f8f8f8] pt-[23px] pl-[22px]">
          <Point title="创新主打产品" lead="爆款打造：" first="推出X系列储能新品" second="上市3个月占据A平台销量TOP3" />
          <Point title="加强产品售后" lead="售后网络：" first="一二线城市实现“1小" second="时响应、24小时修复”" />
        </div>
        <div className="flex flex-col gap-[35px] bg-[#f8f8f8] pt-[23px] pr-[26px]">
          <Point right title="产品渠道拓展" lead="市场下沉：" first="新增地级核心代理商" second="销售占比由27%提升至39%" />
          <Point right title="加强团队建设" lead="人才培养：" first="销售、产品、供应链" second="高校完成梯队培训1180人" />
        </div>
        <i className="absolute top-0 left-0 h-[18px] w-[18px] border-t-3 border-l-3 border-[#8e1c24]" />
        <i className="absolute top-0 right-0 h-[18px] w-[18px] border-t-3 border-r-3 border-[#8e1c24]" />
        <i className="absolute bottom-0 left-0 h-5 w-[18px] border-b-3 border-l-3 border-[#8e1c24]" />
        <i className="absolute right-0 bottom-0 h-5 w-[18px] border-r-3 border-b-3 border-[#8e1c24]" />
        <Hubs />
      </div>
    </div>
  );
}

/* ---------- window ---------- */

const TABS = ["开始", "插入", "绘图", "设计", "切换", "动画", "幻灯片放映", "录制", "审阅", "视图", "帮助"];

export default function App() {
  return (
    <div className="relative flex h-screen flex-col overflow-hidden bg-[#efefef] font-['Noto_Sans','Noto_Sans_CJK_SC',sans-serif]">
      <div className="grid h-[34px] shrink-0 grid-cols-[407px_minmax(0,300px)_1fr] items-center text-xs text-[#b3b3b3]">
        <div className="flex items-center gap-3 pl-[9px] whitespace-pre">
          <Svg w={16} h={16}>
            <circle cx="8.500" cy="8" r="7.500" fill="#d84a1b" stroke="none" />
            <path d="M8.500 8V.5A7.500 7.500 0 0 1 16 8z" fill="#e2622f" stroke="none" />
            <rect x="0" y="4" width="9" height="9" rx="1" fill="#a11226" stroke="none" />
            <path d="M3.500 11V6.500h1.500c2 0 2 2.500 0 2.500H3.500" stroke="#fff" strokeWidth="1.200" />
          </Svg>
          <span>{"【秋叶PPT模板】51页数据汇报表（红色系）  -  PowerPoint"}</span>
        </div>
        <label className="flex h-8 items-center gap-3 rounded border border-b-2 border-[#d2d2d2] bg-[#f0f0f0] pl-[13px]">
          <Svg w={15} h={15}><circle cx="9.500" cy="5.500" r="5" /><path d="M6 9 .5 14.500" /></Svg>
          <input aria-label="搜索" placeholder="搜索" className="min-w-0 flex-1 bg-transparent text-[13px] outline-none placeholder:text-[#b8b8b8]" />
        </label>
        <div className="flex items-center justify-end overflow-hidden">
          <button type="button" className="mr-7 h-[19px] w-[45px] rounded-xs bg-[#bdbdbd] text-xs leading-[19px] text-[#f3f3f3]">登录</button>
          <button type="button" aria-label="最小化" className="mr-[37px]"><Svg w={11} h={11}><path d="M0 5.500h11" /></Svg></button>
          <button type="button" aria-label="最大化" className="mr-[37px]"><Svg w={10} h={10}><path d="M.5.5h9v9h-9z" /></Svg></button>
          <button type="button" aria-label="关闭" className="-mr-[6px]"><Svg w={10} h={10}><path d="m0 0 10 10M10 0 0 10" /></Svg></button>
        </div>
      </div>

      <nav className="flex h-9 shrink-0 items-start pl-[11px] text-[13px] leading-[21px] text-[#262626]">
        <button type="button" className="mr-[22px] h-[33px] pt-2">文件</button>
        <div className="flex gap-[18px]">
          {TABS.map((t, i) => (
            <button key={t} type="button" className={`h-[33px] border-b-2 pt-[10px] ${i === 0 ? "border-[#c43e1c] font-bold" : "border-transparent"}`}>{t}</button>
          ))}
        </div>
        <button type="button" className="mt-[9px] ml-auto flex h-6 w-[50px] items-center gap-1 rounded-l bg-[#c43e1c] pl-[5px] whitespace-nowrap text-white">
          <Svg w={12} h={13}><path d="M4 3.500H.5v9h9V9M3 9c0-3 2-5 5-5V1.500l3.500 3.500L8 8.500V6C6 6 4 7 3 9z" /></Svg>
          共享
        </button>
      </nav>

      <div className="shrink-0"><Ribbon /><QuickBar /></div>

      <main className="flex min-h-0 flex-1">
        <Outline />
        <div className="flex min-w-0 flex-1 flex-col pt-[62px] pr-[3px] pb-1 pl-[13px]">
          <Slide />
        </div>
      </main>

      <svg width="12" height="19" viewBox="0 0 12 19" className="absolute top-[55px] left-[191px]" aria-hidden="true">
        <path d="M.7.8v14.500l3.400-3.200 2.500 5.700 2.600-1.100-2.500-5.600h4.500z" fill="#fff" stroke="#222" />
      </svg>
    </div>
  );
}
